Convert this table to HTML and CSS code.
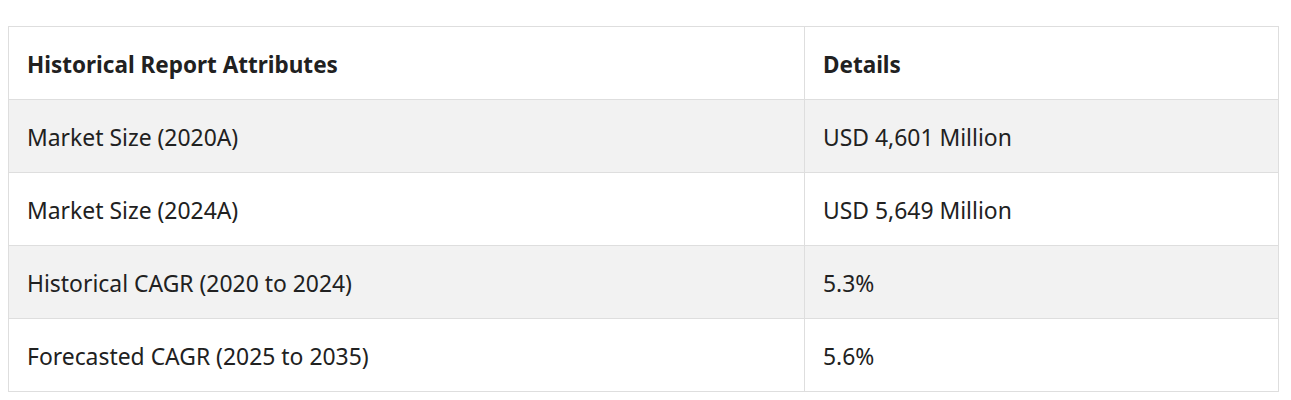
FILE: index.html
```html
<!DOCTYPE html>
<html lang="en">
<head>
<meta charset="utf-8">
<link rel="stylesheet" href="styles.css">
</head>
<body>
<div class="wrap">
<table class="report">
  <thead>
    <tr><th class="col-a">Historical Report Attributes</th><th>Details</th></tr>
  </thead>
  <tbody>
    <tr class="alt"><td>Market Size (2020A)</td><td>USD 4,601 Million</td></tr>
    <tr><td>Market Size (2024A)</td><td>USD 5,649 Million</td></tr>
    <tr class="alt"><td>Historical CAGR (2020 to 2024)</td><td>5.3%</td></tr>
    <tr><td>Forecasted CAGR (2025 to 2035)</td><td>5.6%</td></tr>
  </tbody>
</table>
</div>
</body>
</html>
```
FILE: styles.css
```css
html, body {
  margin: 0;
  background: #ffffff;
}
body {
  padding: 26px 8px 8px 8px;
  font-family: "Noto Sans", "Open Sans", sans-serif;
  color: #212121;
}
.wrap {
  width: 1271px;
}
.report {
  width: 100%;
  border-collapse: collapse;
  table-layout: fixed;
  font-size: 22.9px;
}
.report th, .report td {
  border: 1px solid #dedede;
  height: 73px;
  padding: 4px 18px 0 18px;
  text-align: left;
  vertical-align: middle;
  box-sizing: border-box;
  line-height: 1.3;
}
.report th {
  font-weight: 700;
  font-size: 22.5px;
}
.report .col-a {
  width: 796px;
}
.report tr.alt td {
  background: #f2f2f2;
}
```
